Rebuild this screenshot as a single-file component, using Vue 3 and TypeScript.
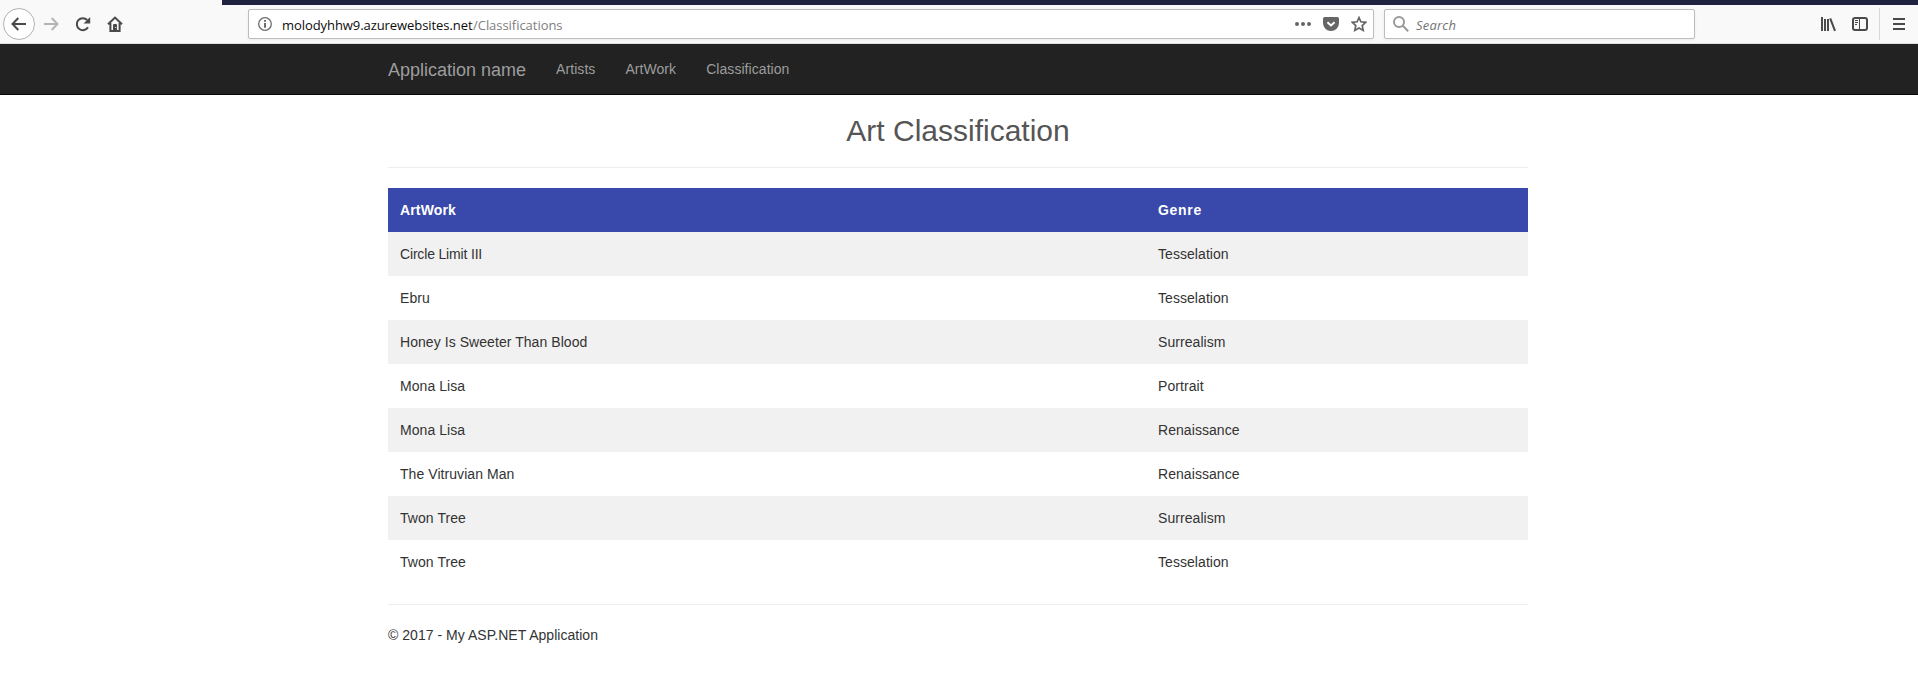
<script setup lang="ts">
interface Classification {
  artwork: string
  genre: string
}

const links: string[] = ['Artists', 'ArtWork', 'Classification']

const rows: Classification[] = [
  { artwork: 'Circle Limit III', genre: 'Tesselation' },
  { artwork: 'Ebru', genre: 'Tesselation' },
  { artwork: 'Honey Is Sweeter Than Blood', genre: 'Surrealism' },
  { artwork: 'Mona Lisa', genre: 'Portrait' },
  { artwork: 'Mona Lisa', genre: 'Renaissance' },
  { artwork: 'The Vitruvian Man', genre: 'Renaissance' },
  { artwork: 'Twon Tree', genre: 'Surrealism' },
  { artwork: 'Twon Tree', genre: 'Tesselation' },
]
</script>

<template>
  <div class="window">
    <header class="browser">
      <div class="title-strip"></div>
      <div class="toolbar">
        <div class="nav-buttons">
          <span class="back">
            <svg class="icon" viewBox="0 0 16 16"><path d="M15 8H2M7.3 2L1.5 8l5.8 6" /></svg>
          </span>
          <svg class="icon faded" viewBox="0 0 16 16"><path d="M1 8h13M8.7 2l5.8 6-5.8 6" /></svg>
          <svg class="icon" viewBox="0 0 16 16">
            <path d="M12.2 4A6 6 0 1 0 13 11.2" />
            <path class="solid" d="M15.2 1v6.6H8.6z" />
          </svg>
          <svg class="icon" viewBox="0 0 16 16">
            <path d="M1 8.3L8 1.6l7 6.7M3.4 7v8h9.2V7" />
            <path class="solid" d="M6 9.2Q6 8 7 8h2q1 0 1 1.2V15H6z" />
            <circle cx="8.8" cy="11.5" r=".6" fill="#fff" stroke="none" />
          </svg>
        </div>

        <div class="field address">
          <svg class="info" viewBox="0 0 14 14">
            <circle cx="7" cy="7" r="6.3" />
            <path d="M7 6v4.8M7 3v1.8" />
          </svg>
          <span class="url"><span class="host">molodyhhw9.azurewebsites.net</span><span class="path">/Classifications</span></span>
          <div class="page-actions">
            <svg class="icon gray" viewBox="0 0 16 16">
              <g class="solid"><circle cx="2" cy="8" r="2" /><circle cx="8" cy="8" r="2" /><circle cx="14" cy="8" r="2" /></g>
            </svg>
            <svg class="icon gray" viewBox="0 0 16 16">
              <path class="solid" d="M1.7 1h12.6Q16 1 16 2.7V7a8 8 0 0 1-16 0V2.7Q0 1 1.7 1z" />
              <path d="M4.4 6.2L8 9.5l3.6-3.3" stroke="#fff" />
            </svg>
            <svg class="icon gray" viewBox="0 0 16 16">
              <path d="M8 1.6l1.9 4.2 4.8.5-3.5 3.2 1 4.9L8 12l-4.2 2.4 1-4.9-3.5-3.2 4.8-.5z" stroke-width="1.7" />
            </svg>
          </div>
        </div>

        <div class="field search">
          <svg class="icon magnifier" viewBox="0 0 16 16"><circle cx="6" cy="6" r="5" /><path d="M9.8 9.8l5.4 5.4" /></svg>
          <span class="placeholder">Search</span>
        </div>

        <div class="tools">
          <svg class="icon" viewBox="0 0 16 16">
            <path class="solid" d="M1 1h2v14H1zM4 3h2v12H4zM7 3h2v12H7z" />
            <path d="M10.2 2.3L15 14.8" />
          </svg>
          <svg class="icon" viewBox="0 0 16 16">
            <rect x="1" y="2" width="14" height="12" rx="2" />
            <path d="M7.5 2v12M3 4.5h3M3 6.5h3M3 8.5h2" stroke-width="1" />
          </svg>
          <span class="divider"></span>
          <svg class="menu" viewBox="0 0 12 12"><path d="M0 1h12M0 6h12M0 11h12" /></svg>
        </div>
      </div>
    </header>

    <nav class="navbar">
      <div class="container nav-row">
        <a class="brand">Application name</a>
        <a v-for="link in links" :key="link" class="nav-link">{{ link }}</a>
      </div>
    </nav>

    <main class="container">
      <h2>Art Classification</h2>
      <hr />
      <table>
        <thead>
          <tr><th class="artwork">ArtWork</th><th class="genre">Genre</th></tr>
        </thead>
        <tbody>
          <tr v-for="(row, i) in rows" :key="i">
            <td :class="{ tight: row.artwork.endsWith('III') }">{{ row.artwork }}</td>
            <td>{{ row.genre }}</td>
          </tr>
        </tbody>
      </table>
      <hr />
      <footer>© 2017 - My ASP.NET Application</footer>
    </main>
  </div>
</template>

<style>
body {
  margin: 0;
  background: #fff;
}
</style>

<style scoped>
.window {
  height: 696px;
  overflow: hidden;
  font: 14px/20px "Liberation Sans", Arial, sans-serif;
  color: #333;
}
.browser {
  height: 44px;
  box-sizing: border-box;
  background: #f9f9fa;
  border-bottom: 1px solid #dedede;
  font-family: "Open Sans", "Noto Sans", sans-serif;
}
.title-strip {
  height: 5px;
  margin-left: 222px;
  background: #202340;
}
.toolbar {
  display: flex;
  align-items: center;
  height: 38px;
}
.icon {
  display: block;
  flex: none;
  width: 16px;
  height: 16px;
  fill: none;
  stroke: #4a4a4b;
  stroke-width: 2;
  color: #4a4a4b;
}
.icon .solid {
  fill: currentColor;
  stroke: none;
}
.faded {
  stroke: #b4b4b5;
}
.gray {
  stroke: #666;
  color: #666;
}
.nav-buttons {
  display: flex;
  align-items: center;
  gap: 16px;
  width: 245px;
  padding-left: 3px;
}
.back {
  display: grid;
  place-items: center;
  width: 32px;
  height: 32px;
  box-sizing: border-box;
  margin-right: -8px;
  border: 1px solid #b1b1b1;
  border-radius: 50%;
  background: #fff;
}
.field {
  display: flex;
  align-items: center;
  height: 30px;
  box-sizing: border-box;
  border: 1px solid #bdbdbd;
  border-radius: 2px;
  background: #fff;
  box-shadow: 0 1px 3px rgba(0, 0, 0, 0.06);
}
.address {
  width: 1126px;
  padding: 0 6px 0 9px;
}
.info {
  width: 14px;
  height: 14px;
  fill: none;
  stroke: #6c6c6c;
  stroke-width: 1.3;
}
.info path {
  stroke-width: 2;
}
.url {
  flex: 1;
  display: flex;
  padding: 2px 0 0 10px;
  font-size: 13px;
  white-space: nowrap;
}
.host {
  width: 191px;
  letter-spacing: -0.07px;
  color: #0c0c0d;
}
.path {
  letter-spacing: -0.04px;
  color: #808080;
}
.page-actions {
  display: flex;
  gap: 12px;
}
.search {
  width: 311px;
  margin-left: 10px;
  padding-left: 8px;
}
.magnifier {
  stroke: #999;
}
.placeholder {
  padding: 2px 0 0 7px;
  font-size: 13px;
  letter-spacing: 0.2px;
  font-style: italic;
  color: #737373;
}
.tools {
  display: flex;
  align-items: center;
  gap: 16px;
  margin-left: 125px;
}
.divider {
  width: 1px;
  height: 32px;
  margin: 0 -3px 0 -5px;
  background: #d7d7db;
}
.menu {
  width: 12px;
  height: 12px;
  fill: none;
  stroke: #4a4a4b;
  stroke-width: 2;
}
.navbar {
  height: 50px;
  background: #222;
  border-bottom: 1px solid #080808;
}
.container {
  width: 1140px;
  margin: 0 auto;
  position: relative;
  left: -1px;
}
.nav-row {
  display: flex;
  color: #9d9d9d;
}
.brand {
  padding: 16px 15px 14px 0;
  font-size: 18px;
}
.nav-link {
  padding: 15px;
  letter-spacing: 0.06px;
}
h2 {
  margin: 0;
  padding: 19px 0 20px;
  font-size: 30px;
  font-weight: 500;
  line-height: 33px;
  text-align: center;
  color: #555;
}
hr {
  height: 0;
  margin: 0 0 20px;
  border: 0;
  border-top: 1px solid #eee;
}
table {
  width: 100%;
  margin-bottom: 20px;
  border-collapse: collapse;
  table-layout: fixed;
}
th,
td {
  padding: 12px;
  line-height: 20px;
  text-align: left;
  letter-spacing: 0.06px;
}
th {
  background: #3949ab;
  color: #fff;
  letter-spacing: 0.15px;
}
.genre {
  letter-spacing: 0.7px;
}
.tight {
  letter-spacing: -0.17px;
}
.artwork {
  width: 734px;
}
tbody tr:nth-child(odd) {
  background: #f1f1f1;
}
footer {
  letter-spacing: 0.03px;
}
</style>
